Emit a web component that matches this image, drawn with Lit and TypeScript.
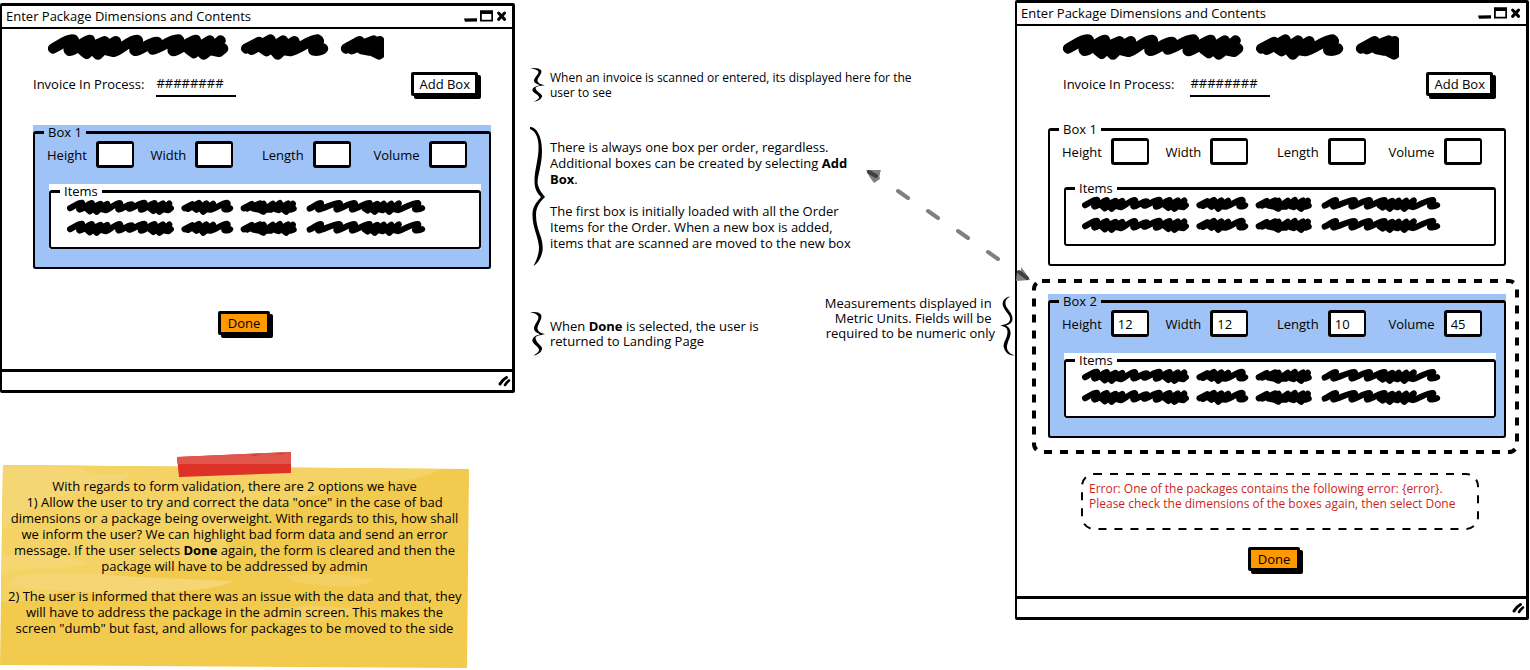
import { LitElement, html, css, svg } from "lit";

const baseStyles = css`
  *,
  *::before,
  *::after {
    box-sizing: border-box;
  }
  button,
  input {
    font: inherit;
    color: inherit;
    margin: 0;
  }
  svg {
    display: block;
  }
`;

/* Hand-scribbled placeholder words, one path per word. */
const WORDS = [
  "M23 60 C50 46 70 30 84 33 C92 40 62 62 72 67 C84 70 112 38 134 34 L112 66 L124 76 L150 50 L178 38 L146 66 L158 78 L182 54 L212 38 L186 66 L205 70 C225 66 255 32 276 34 C286 40 260 62 270 67 C290 66 310 40 336 40 C342 46 314 56 322 63 C345 62 372 32 400 33 C408 40 374 62 384 68 C400 68 430 38 452 34 L430 62 L446 74 L470 50 L494 36 L464 66 L476 78 L504 56 L526 36 L500 66 L522 70 L534 60",
  "M603 60 L642 40 L620 64 L676 33 L650 58 L664 68 L714 36 L684 62 L698 78 L722 54 L748 38 L720 66 L736 68 C760 64 795 32 818 33 C832 40 798 60 806 66 C815 68 830 66 834 60",
  "M903 60 L944 38 L920 62 L986 36 L950 62 L970 66 L1004 38 L978 66 L1002 78 L1030 52 L1050 38 L1020 66 L1040 68 L1086 34 L1062 64 L1080 70 L1104 50 L1128 36 L1100 64 L1118 78 L1152 38 L1138 68 L1156 62",
  "M1237 62 C1262 50 1282 30 1294 34 C1300 40 1272 62 1282 67 C1310 62 1360 32 1388 34 C1398 40 1364 62 1374 67 C1400 62 1440 32 1464 34 C1474 40 1444 62 1452 67 C1480 62 1510 36 1540 34 L1516 62 L1530 72 L1556 50 L1580 38 L1552 66 L1566 78 L1590 54 L1612 38 L1588 66 L1606 70 L1650 38 L1626 64 L1640 78 L1664 54 L1688 36 L1662 64 L1684 70 C1720 60 1760 30 1786 34 C1794 42 1764 60 1772 66 C1784 68 1796 66 1806 60",
];

class SketchScribble extends LitElement {
  static properties = { size: { type: String } };
  declare size: string;

  static styles = [
    baseStyles,
    css`
      :host {
        display: block;
      }
      .ink {
        fill: none;
        stroke: #000;
        stroke-width: 31;
        stroke-linecap: round;
        stroke-linejoin: round;
      }
      .heading {
        width: 336px;
        height: 27px;
      }
      .line {
        width: 359px;
        height: 16px;
      }
    `,
  ];

  render() {
    const heading = this.size === "heading";
    return html`<svg
      class=${heading ? "heading" : "line"}
      viewBox=${heading ? "8 14 1009 80" : "8 14 1818 80"}
      aria-hidden="true"
    >
      ${(heading ? WORDS.slice(0, 3) : WORDS).map((d) => svg`<path class="ink" d=${d} />`)}
    </svg>`;
  }
}
customElements.define("sketch-scribble", SketchScribble);

class PackageBox extends LitElement {
  static properties = {
    name: { type: String },
    highlighted: { type: Boolean },
    values: { attribute: false },
  };
  declare name: string;
  declare highlighted: boolean;
  declare values: string[];

  constructor() {
    super();
    this.name = "";
    this.highlighted = false;
    this.values = ["", "", "", ""];
  }

  static styles = [
    baseStyles,
    css`
      :host {
        display: block;
      }
      .sheet {
        background: transparent;
      }
      .sheet.highlighted {
        background: #9fc3f7;
      }
      .group {
        margin: 0;
        min-width: 0;
        border: 2px solid #000;
        border-width: 3px 2px 2px;
        border-radius: 3px;
        padding: 0;
      }
      .legend {
        line-height: 15px;
        margin-left: 9px;
        padding: 0 4px;
      }
      .outer {
        padding: 1px 8px 18px 12px;
      }
      .outer > .legend {
        margin-left: -3px;
      }
      .fields {
        display: grid;
        grid-template-columns: 103fr 111fr 111fr 107fr;
      }
      .field {
        display: flex;
        align-items: center;
        gap: 9px;
      }
      .input {
        width: 38px;
        height: 27px;
        border: 3px solid #000;
        border-width: 3px 2px 3px 3px;
        border-radius: 3px;
        background: #fff;
        padding: 0 4px;
        outline: none;
      }
      .items {
        margin-top: 16px;
        margin-left: 2px;
        background: #fff;
      }
      .rows {
        display: grid;
        gap: 5px;
        padding: 0 0 11px 16px;
      }
    `,
  ];

  render() {
    const labels = ["Height", "Width", "Length", "Volume"];
    return html`
      <div class="sheet ${this.highlighted ? "highlighted" : ""}">
        <fieldset class="group outer">
          <legend class="legend">${this.name}</legend>
          <div class="fields">
            ${labels.map(
              (label, i) => html`<label class="field"
                >${label}<input class="input" type="text" inputmode="numeric" .value=${this.values[i]}
              /></label>`
            )}
          </div>
          <div class="items">
            <fieldset class="group">
              <legend class="legend">Items</legend>
              <div class="rows">
                <sketch-scribble size="line"></sketch-scribble>
                <sketch-scribble size="line"></sketch-scribble>
              </div>
            </fieldset>
          </div>
        </fieldset>
      </div>
    `;
  }
}
customElements.define("package-box", PackageBox);

class SketchWindow extends LitElement {
  static properties = { heading: { type: String } };
  declare heading: string;

  static styles = [
    baseStyles,
    css`
      :host {
        display: block;
      }
      .frame {
        border: 3px solid #000;
        border-width: 3px 3px 3px 2px;
        border-radius: 2px;
        background: #fff;
      }
      .titlebar {
        display: flex;
        align-items: center;
        justify-content: space-between;
        height: 23px;
        border-bottom: 2px solid #000;
        padding: 0 5px 1px 4px;
      }
      .title {
        font: inherit;
        margin: 0;
      }
      .controls {
        width: 43px;
        height: 12px;
      }
      .statusbar {
        display: flex;
        justify-content: flex-end;
        align-items: center;
        height: 21px;
        border-top: 3px solid #000;
        padding-right: 1px;
      }
      .grip {
        width: 14px;
        height: 12px;
      }
      .stroke {
        fill: none;
        stroke: #000;
        stroke-linecap: round;
      }
    `,
  ];

  render() {
    return html`
      <section class="frame">
        <header class="titlebar">
          <h2 class="title">${this.heading}</h2>
          <svg class="controls" viewBox="0 0 43 12" aria-hidden="true">
            <path d="M0 8.5 L13 8.3 V11.5 L1 11.8 Z" />
            <path fill-rule="evenodd" d="M16 0.3 H29 V11.5 H16 Z M17.8 4 V9.8 H27.3 V4 Z" />
            <path class="stroke" stroke-width="3" d="M34.6 3 L40.6 9.4 M40.6 3 L34.6 9.4" />
          </svg>
        </header>
        <slot></slot>
        <footer class="statusbar">
          <svg class="grip" viewBox="0 0 14 12" aria-hidden="true">
            <path class="stroke" stroke-width="3" d="M3 9 Q5 5 9.500 2.500" />
            <path class="stroke" stroke-width="2.600" d="M8 10 Q9.500 7.500 12 5.500" />
          </svg>
        </footer>
      </section>
    `;
  }
}
customElements.define("sketch-window", SketchWindow);

class AppRoot extends LitElement {
  static styles = [
    baseStyles,
    css`
      :host {
        display: block;
        font: 13px/16px "Open Sans", "Liberation Sans", sans-serif;
        color: #000;
        background: #fff;
      }
      .board {
        display: grid;
        grid-template-columns: 515px minmax(0, 1fr) 514px;
        align-items: start;
        padding-right: 1px;
        overflow: hidden;
      }
      .before {
        padding-top: 3px;
      }

      .body {
        padding: 4px 21px 34px 31px;
      }
      .body.error {
        padding: 7px 20px 25px 31px;
      }
      .banner {
        padding-left: 15px;
      }
      .invoice {
        display: flex;
        align-items: center;
        justify-content: space-between;
        margin: 11px 13px 28px 0;
      }
      .error .invoice {
        padding-left: 15px;
        margin-bottom: 25px;
      }
      .number {
        display: flex;
        align-items: center;
        gap: 12px;
      }
      .error .number {
        gap: 16px;
      }
      .number-input {
        width: 80px;
        height: 26px;
        border: 0;
        border-bottom: 2px solid #000;
        background: transparent;
        padding: 0;
        outline: none;
      }
      .button {
        height: 24px;
        border: 3px solid #000;
        border-radius: 2px;
        background: #fff;
        box-shadow: 3px 3px 0 #000;
        padding: 0 5px;
        line-height: 18px;
      }
      .button.primary {
        background: #ff9900;
        padding: 0 7px;
      }
      .actions {
        display: flex;
        justify-content: center;
        margin-top: 42px;
        padding-right: 36px;
      }
      .error .actions {
        margin-top: 17px;
        padding-right: 6px;
      }

      .dashed {
        position: relative;
      }
      .dash-frame {
        position: absolute;
        inset: 0;
        width: 100%;
        height: 100%;
        overflow: visible;
      }
      .dash {
        fill: none;
        stroke: #000;
        stroke-dasharray: 8 8;
      }
      .thick {
        x: 2px;
        y: 2px;
        width: calc(100% - 4px);
        height: calc(100% - 4px);
        rx: 8px;
        stroke-width: 4;
      }
      .thin {
        x: 1px;
        y: 1px;
        width: calc(100% - 2px);
        height: calc(100% - 2px);
        rx: 12px;
        stroke-width: 2;
      }
      .spotlight {
        margin: 13px -13px 0 -16px;
        padding: 15px 13px 16px 16px;
      }
      .alert {
        margin: 19px 27px 0 33px;
        padding: 8px 8px 19px;
        color: #cc1f1f;
      }
      .alert-text {
        margin: 0;
        font-size: 12px;
        line-height: 15px;
        white-space: nowrap;
      }

      .notes {
        position: relative;
        padding: 68px 0 0 15px;
      }
      .note {
        display: flex;
        align-items: center;
        gap: 5px;
        line-height: 15px;
      }
      .note.long {
        line-height: 16px;
      }
      .long-text {
        padding-bottom: 4px;
      }
      .note-text {
        margin: 0;
        white-space: nowrap;
      }
      .note-text + .note-text {
        margin-top: 16px;
      }
      .brace {
        flex: none;
        width: 15px;
      }
      .brace.small {
        height: 34px;
      }
      .brace.tall {
        height: 139px;
      }
      .brace.medium {
        height: 44px;
      }
      .brace.large {
        height: 60px;
      }
      .scanned {
        margin-bottom: 25px;
        font-size: 12px;
      }
      .paired {
        display: flex;
        justify-content: space-between;
        align-items: flex-end;
        margin-top: 30px;
      }
      .measure {
        text-align: right;
        align-items: flex-start;
      }
      .link-arrow {
        position: absolute;
        top: 165px;
        right: -16px;
        width: 168px;
        height: 120px;
        z-index: 1;
      }

      .sticky {
        position: relative;
        width: 469px;
        margin-top: 72px;
        padding: 13px 8px 32px;
        text-align: center;
      }
      .paper {
        position: absolute;
        inset: 0;
        width: 100%;
        height: 100%;
      }
      .tape {
        position: absolute;
        top: -14px;
        left: 176px;
        width: 116px;
        height: 26px;
      }
      .sticky-text {
        position: relative;
        margin: 0;
        white-space: nowrap;
      }
      .sticky-text.spaced {
        margin-top: 14px;
      }
    `,
  ];

  private brace(size: string, flipped = false) {
    const small =
      "M0 0.5 Q8 -1 11 2.500 C13 7 7 13 7.500 17 C8.500 21 12 21.500 15 22.500 C10 23.500 6 24 5.500 26 C6 32 13 34 12 37.500 C11 41 8 43.500 3.500 44 C7 42 9.500 40 9 38 C8 34 1.500 32 2.500 28 C3.500 24 8 23.500 10 22.500 C6 21 3.500 19 4 16 C5 11 10 7 8 4 C6.500 1.500 4 1 0 0.5 Z";
    const tall =
      "M0 0 C5 -0.5 12 7 12 24 C12 40 6 52 8 58 C9.500 64 13 67 15 70 C12 73 6 78 6 88 C6 104 14 110 12.500 124 C11 132 7 137 3.500 139 C6 134 9 128 9 120 C8 108 2 100 2.500 86 C3 78 8 74 11 70 C7 66 4.500 62 4.500 54 C4.500 42 9 32 8.500 18 C8 9 5 4 0 2 Z";
    const wide =
      "M10.500 0.5 C5 1 1.500 5 3 10 C5 16 11 19 10 24 C9 28 4 28.500 0 29.500 C4 30.500 7 31 7.500 35 C8 42 2 47 4 52 C5.500 57 9 59.500 14.500 59.500 C10 58 6.500 55 7 50 C8 44 11 41 10.500 36 C10 32 8 30.500 6 29.500 C9 28.500 12.500 27 12.500 23 C12.500 16 6 13 5.500 8 C5 4 7.500 2 10.500 0.5 Z";
    const box = flipped ? "0 0 15 60" : size === "tall" ? "0 0 15 139" : "0 0 15 44.5";
    return html`<svg class="brace ${size}" viewBox=${box} preserveAspectRatio="none" aria-hidden="true">
      <path d=${flipped ? wide : size === "tall" ? tall : small} />
    </svg>`;
  }

  private invoice(id: string) {
    return html`
      <div class="banner"><sketch-scribble size="heading"></sketch-scribble></div>
      <div class="invoice">
        <div class="number">
          <label for=${id}>Invoice In Process:</label>
          <input class="number-input" id=${id} type="text" value="########" />
        </div>
        <button class="button" type="button">Add Box</button>
      </div>
    `;
  }

  render() {
    return html`
      <main class="board">
        <div class="before">
          <sketch-window heading="Enter Package Dimensions and Contents">
            <div class="body">
              ${this.invoice("invoice-a")}
              <package-box name="Box 1" highlighted></package-box>
              <div class="actions"><button class="button primary" type="button">Done</button></div>
            </div>
          </sketch-window>

          <aside class="sticky">
            <svg class="paper" viewBox="0 0 469 205" preserveAspectRatio="none" aria-hidden="true">
              <path fill="#f2ca4e" d="M3 0 L469 4 L467 205 L0 202 Z" />
              <path fill="#f4d264" d="M3 0 L442 4 Q420 16 380 18 Q300 30 262 50 Q220 70 228 86 Q240 104 170 102 Q90 108 60 128 Q30 140 1 138 Z" />
              <path fill="#f5d674" d="M3 1 L82 2 Q84 12 128 8 Q134 14 104 22 Q60 28 20 48 Q8 60 3 66 Z" />
              <path fill="#f5d574" d="M10 118 Q20 104 120 112 Q200 116 234 117 Q220 126 150 130 Q60 130 10 122 Z" />
              <path fill="#f4d062" d="M286 112 Q330 106 372 116 Q370 124 330 122 Q290 120 286 112 Z" />
              <path fill="#f5d670" d="M2 92 Q40 84 88 98 Q90 104 40 104 Q10 106 2 110 Z" />
              <path fill="#f4d062" d="M268 148 Q300 138 360 146 Q330 162 290 160 Q266 158 268 148 Z" />
            </svg>
            <svg class="tape" viewBox="0 0 116 26" aria-hidden="true">
              <path fill="#de3128" d="M1 6 L115 1 L115 22 L3 26 Z" />
              <path fill="#e0564d" d="M1 6 L115 1 L115 13 L1.500 13 Z" />
              <path fill="#de3128" d="M74 4 Q80 6 84 3.500 Z M100 2.500 Q106 4.500 110 2 Z" />
            </svg>
            <p class="sticky-text">
              With regards to form validation, there are 2 options we have<br />
              1) Allow the user to try and correct the data "once" in the case of bad<br />
              dimensions or a package being overweight. With regards to this, how shall<br />
              we inform the user? We can highlight bad form data and send an error<br />
              message. If the user selects <b>Done</b> again, the form is cleared and then the<br />
              package will have to be addressed by admin
            </p>
            <p class="sticky-text spaced">
              2) The user is informed that there was an issue with the data and that, they<br />
              will have to address the package in the admin screen. This makes the<br />
              screen "dumb" but fast, and allows for packages to be moved to the side
            </p>
          </aside>
        </div>

        <div class="notes">
          <div class="note scanned">
            ${this.brace("small")}
            <p class="note-text">
              When an invoice is scanned or entered, its displayed here for the<br />
              user to see
            </p>
          </div>
          <div class="note long">
            ${this.brace("tall")}
            <div class="long-text">
              <p class="note-text">
                There is always one box per order, regardless.<br />
                Additional boxes can be created by selecting <b>Add<br />Box</b>.
              </p>
              <p class="note-text">
                The first box is initially loaded with all the Order<br />
                Items for the Order. When a new box is added,<br />
                items that are scanned are moved to the new box
              </p>
            </div>
          </div>
          <div class="paired">
            <div class="note">
              ${this.brace("medium")}
              <p class="note-text">
                When <b>Done</b> is selected, the user is<br />
                returned to Landing Page
              </p>
            </div>
            <div class="note measure">
              <p class="note-text">
                Measurements displayed in&nbsp;<br />
                Metric Units. Fields will be&nbsp;<br />
                required to be numeric only
              </p>
              ${this.brace("large", true)}
            </div>
          </div>
          <svg class="link-arrow" viewBox="0 0 168 120" aria-hidden="true">
            <g fill="none" stroke="#808080" stroke-width="4" stroke-linecap="round">
              <path d="M35 26 L45 33 M65 46 L75 53 M95 66 L105 73 M125 87 L135 94" />
            </g>
            <path fill="#808080" d="M3 5 L18 5 L17 8 L16.500 12 L17 14 L11 18 Q6 12 3 5 Z" />
            <path stroke="#404040" stroke-width="4" stroke-linecap="round" d="M6 7 L13 11" />
            <path fill="#808080" d="M158 102 Q163 108 167 115 L153 116 L154 106 L158 107 Z" />
            <path stroke="#404040" stroke-width="4" stroke-linecap="round" d="M156 107 L164 113" />
          </svg>
        </div>

        <sketch-window heading="Enter Package Dimensions and Contents">
          <div class="body error">
            ${this.invoice("invoice-b")}
            <package-box name="Box 1"></package-box>
            <div class="dashed spotlight">
              <svg class="dash-frame" aria-hidden="true"><rect class="dash thick" /></svg>
              <package-box name="Box 2" highlighted .values=${["12", "12", "10", "45"]}></package-box>
            </div>
            <div class="dashed alert" role="alert">
              <svg class="dash-frame" aria-hidden="true"><rect class="dash thin" /></svg>
              <p class="alert-text">
                Error: One of the packages contains the following error: {error}.<br />
                Please check the dimensions of the boxes again, then select Done
              </p>
            </div>
            <div class="actions"><button class="button primary" type="button">Done</button></div>
          </div>
        </sketch-window>
      </main>
    `;
  }
}
customElements.define("app-root", AppRoot);
